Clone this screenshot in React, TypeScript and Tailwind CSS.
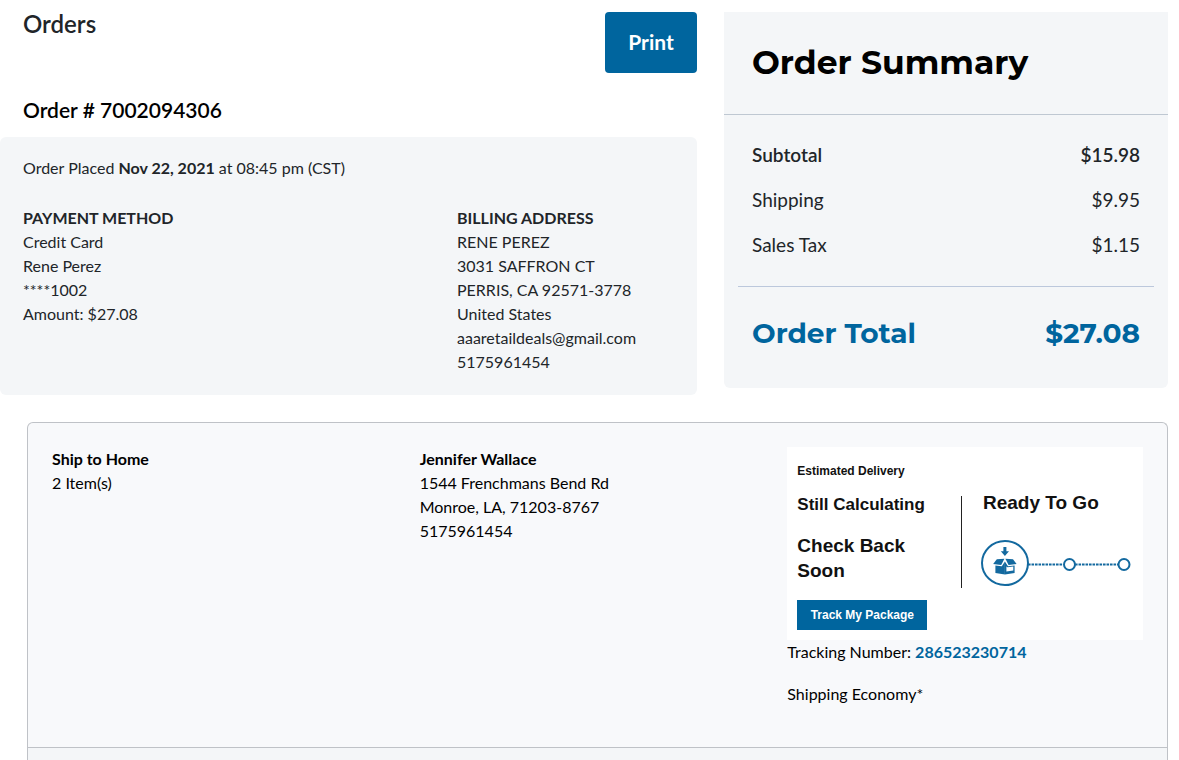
import { FC, ReactNode } from 'react';

interface SummaryRowProps {
  label: string;
  value: string;
  strong?: boolean;
}

const SummaryRow: FC<SummaryRowProps> = ({ label, value, strong = false }) => (
  <div className={`flex justify-between text-[19px] leading-[45px] ${strong ? 'font-semibold' : ''}`}>
    <dt>{label}</dt>
    <dd>{value}</dd>
  </div>
);

// Heading followed by a stack of plain lines
const InfoBlock: FC<{ title: string; lines: string[] }> = ({ title, lines }) => (
  <div>
    <h3 className="font-bold">{title}</h3>
    {lines.map((line) => (
      <p key={line}>{line}</p>
    ))}
  </div>
);

const ProgressTrack: FC = () => (
  <svg
    className="block h-[48px] w-[152px]"
    viewBox="0 0 152 48"
    fill="none"
    stroke="#13699f"
    role="img"
    aria-label="Step 1 of 3"
  >
    <ellipse cx="24" cy="24" rx="23" ry="22" strokeWidth="2" />
    <path d="M47 25.5H82M94 25.5H137" strokeWidth="2" strokeDasharray="2.6 0.9" />
    <circle cx="88.5" cy="25.5" r="5.5" strokeWidth="2" />
    <circle cx="143" cy="25.5" r="5.5" strokeWidth="2" />
    {/* arrow dropping into the box */}
    <g fill="#13699f" stroke="none">
      <path d="M22.4 8h3v4.2h2.6L23.9 17l-4.1-4.8h2.6z" />
      <path d="M15.8 20.2 23.4 19.8 20.2 25.9 12.2 25z" />
      <path d="M24.4 19.8 32 20.2 35.6 25 27.6 25.9z" />
      <path d="M14.4 26.4 20.8 27.2 23.9 22.4V35.6L14.4 34z" />
      <path
        fillRule="evenodd"
        d="M23.9 22.4 27 27.2 33.6 26.4V34L23.9 35.6zM25.4 27.4V32.4L32.3 31.6V27.6L26.6 28.3z"
      />
    </g>
  </svg>
);

const DeliveryWidget: FC = () => (
  <div className="flex bg-white pb-[10px] pl-[10px] font-['Liberation_Sans',Arial,sans-serif] font-bold text-[#111]">
    <div className="flex-1 pt-3">
      <p className="text-[12px] leading-6">Estimated Delivery</p>
      <p className="mt-[10px] text-[17px] leading-6 whitespace-nowrap">Still Calculating</p>
      <p className="mt-4 w-[130px] text-[19px] leading-[25px]">Check Back Soon</p>
      <button type="button" className="mt-[17px] block h-[30px] w-[130px] bg-[#00659e] text-[12px] text-white">
        Track My Package
      </button>
    </div>
    <div className="mt-[49px] h-[92px] w-px bg-[#222]" />
    <div className="pt-11 pr-[10px] pl-[19px]">
      <p className="mb-6 pl-[2px] text-[19px] leading-6">Ready To Go</p>
      <ProgressTrack />
    </div>
  </div>
);

const Panel: FC<{ children: ReactNode }> = ({ children }) => (
  <div className="rounded-md bg-[#f4f6f8] px-[23px] pt-[19px] pb-[21px]">{children}</div>
);

export default function App() {
  return (
    <main className="bg-white pt-3 pr-[11px] font-['Lato',sans-serif] text-[16px] leading-6 text-[#212529]">
      <div className="grid grid-cols-[697fr_444fr] items-start gap-x-[27px]">
        <section>
          <div className="flex items-start justify-between pl-[23px]">
            <h1 className="text-[24px] leading-6 font-semibold">Orders</h1>
            <button
              type="button"
              className="h-[61px] w-[92px] rounded-[4px] bg-[#00659e] pb-[2px] text-[21px] font-bold text-white"
            >
              Print
            </button>
          </div>
          <h2 className="mt-[25px] mb-[15px] pl-[23px] text-[21px] leading-6 font-semibold text-black">
            Order # 7002094306
          </h2>
          <Panel>
            <p>
              Order Placed <strong className="font-bold">Nov 22, 2021</strong> at 08:45 pm (CST)
            </p>
            <div className="mt-[26px] grid grid-cols-[2fr_1fr]">
              <InfoBlock
                title="PAYMENT METHOD"
                lines={['Credit Card', 'Rene Perez', '****1002', 'Amount: $27.08']}
              />
              <InfoBlock
                title="BILLING ADDRESS"
                lines={[
                  'RENE PEREZ',
                  '3031 SAFFRON CT',
                  'PERRIS, CA 92571-3778',
                  'United States',
                  'aaaretaildeals@gmail.com',
                  '5175961454',
                ]}
              />
            </div>
          </Panel>
        </section>

        <aside className="rounded-b-md bg-[#f4f6f8]">
          <h2 className="border-b border-[#bfc8d2] px-7 pt-[30px] pb-8 font-['Montserrat',sans-serif] text-[33px] leading-10 font-bold text-black">
            Order Summary
          </h2>
          <dl>
            <div className="mx-[14px] border-b border-[#bcc8dc] px-[14px] pt-[17px] pb-[19px]">
              <SummaryRow label="Subtotal" value="$15.98" strong />
              <SummaryRow label="Shipping" value="$9.95" />
              <SummaryRow label="Sales Tax" value="$1.15" />
            </div>
            <div className="flex justify-between px-7 pt-7 pb-[37px] font-['Montserrat',sans-serif] text-[28px] leading-9 font-bold text-[#00659e]">
              <dt>Order Total</dt>
              <dd>$27.08</dd>
            </div>
          </dl>
        </aside>
      </div>

      <section className="mt-[27px] ml-[27px] rounded-t-md border border-b-0 border-[#bfc2c7] bg-[#f8f9fb] text-black">
        <div className="grid grid-cols-3 gap-3 border-b border-[#bfc2c7] px-6 pt-6 pb-[41px]">
          <InfoBlock title="Ship to Home" lines={['2 Item(s)']} />
          <InfoBlock
            title="Jennifer Wallace"
            lines={['1544 Frenchmans Bend Rd', 'Monroe, LA, 71203-8767', '5175961454']}
          />
          <div>
            <DeliveryWidget />
            <p>
              Tracking Number:{' '}
              <a href="#tracking" className="font-bold text-[#00659e]">
                286523230714
              </a>
            </p>
            <p className="mt-[18px]">Shipping Economy*</p>
          </div>
        </div>
        <div className="h-8 bg-[#f4f6f8]" />
      </section>
    </main>
  );
}
